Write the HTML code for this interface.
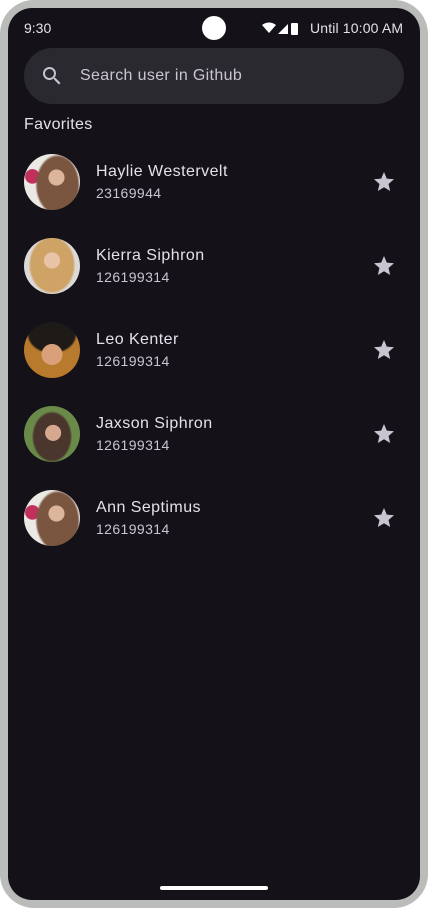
<!DOCTYPE html>
<html><head><meta charset="utf-8"><style>
*{margin:0;padding:0;box-sizing:border-box}
html,body{width:428px;height:908px;background:#fff;overflow:hidden;font-family:"Liberation Sans",sans-serif}
.frame{position:absolute;left:0;top:0;width:428px;height:908px;background:#babcba;border-radius:34px}
.screen{position:absolute;left:8px;top:8px;width:412px;height:892px;background:#141218;border-radius:24px;overflow:hidden}
.t{position:absolute;color:#e6e0e9;white-space:nowrap}
.n{font-size:16px;letter-spacing:0.45px}
.s{font-size:14px;color:#cac4d0;letter-spacing:0.4px}
.search{position:absolute;left:16px;top:40px;width:380px;height:56px;border-radius:28px;background:#2b2930}
.av{position:absolute;left:16px;width:56px;height:56px;border-radius:50%;overflow:hidden}
.star{position:absolute;left:364px;width:24px;height:24px}
.bar{position:absolute;left:152px;top:878px;width:108px;height:4px;border-radius:2px;background:#fff}
</style></head><body>
<div class="frame"></div>
<div class="screen">
  <div class="t" style="left:16px;top:12px;font-size:14px">9:30</div>
  <div style="position:absolute;left:194px;top:8px;width:24px;height:24px;border-radius:50%;background:#fff"></div>
  <svg style="position:absolute;left:254px;top:14px" width="40" height="14" viewBox="0 0 40 14">
    <path d="M0 3 Q7 -2 14 3 L7 11 Z" fill="#fff"/>
    <path d="M16 12 L26 2 L26 12 Z" fill="#fff"/>
    <rect x="29" y="1" width="7" height="12" rx="1" fill="#fff"/>
  </svg>
  <div class="t" style="left:302px;top:12px;font-size:14px;letter-spacing:0.15px">Until 10:00 AM</div>
  <div class="search">
    <svg style="position:absolute;left:16px;top:16px" width="24" height="24" viewBox="0 0 24 24"><path fill="#cac4d0" d="M15.5 14h-.79l-.28-.27A6.47 6.47 0 0 0 16 9.5 6.5 6.5 0 1 0 9.5 16c1.61 0 3.09-.59 4.23-1.57l.27.28v.79l5 4.99L20.49 19l-4.99-5zm-6 0C7.01 14 5 11.99 5 9.5S7.01 5 9.5 5 14 7.01 14 9.5 11.99 14 9.5 14z"/></svg>
    <div class="t" style="left:56px;top:19px;font-size:16px;color:#cac4d0;letter-spacing:0.35px">Search user in Github</div>
  </div>
  <div class="t" style="left:16px;top:108px;font-size:16px;letter-spacing:0.3px">Favorites</div>

  <div class="av" style="top:146px;background:radial-gradient(circle at 58% 42%,#dcb59c 0 17%,transparent 18%),radial-gradient(ellipse 40% 55% at 60% 55%,#7a5640 0 90%,transparent 100%),radial-gradient(circle at 15% 40%,#c0305a 0 12%,transparent 13%),#ece8e4"></div>
  <div class="t n" style="left:88px;top:155px">Haylie Westervelt</div>
  <div class="t s" style="left:88px;top:177px">23169944</div>

  <div class="av" style="top:230px;background:radial-gradient(circle at 50% 40%,#e8c3a8 0 18%,transparent 19%),radial-gradient(ellipse 42% 52% at 50% 48%,#cfa266 0 90%,transparent 100%),#dcdad8"></div>
  <div class="t n" style="left:88px;top:239px">Kierra Siphron</div>
  <div class="t s" style="left:88px;top:261px">126199314</div>

  <div class="av" style="top:314px;background:radial-gradient(circle at 50% 58%,#d9a07a 0 24%,transparent 25%),radial-gradient(ellipse 45% 35% at 50% 22%,#1d1a18 0 90%,transparent 100%),#b87a2c"></div>
  <div class="t n" style="left:88px;top:323px">Leo Kenter</div>
  <div class="t s" style="left:88px;top:345px">126199314</div>

  <div class="av" style="top:398px;background:radial-gradient(circle at 52% 48%,#d6a890 0 19%,transparent 20%),radial-gradient(ellipse 36% 46% at 50% 55%,#4a362c 0 90%,transparent 100%),#6a8a4a"></div>
  <div class="t n" style="left:88px;top:407px">Jaxson Siphron</div>
  <div class="t s" style="left:88px;top:429px">126199314</div>

  <div class="av" style="top:482px;background:radial-gradient(circle at 58% 42%,#dcb59c 0 17%,transparent 18%),radial-gradient(ellipse 40% 55% at 60% 55%,#7a5640 0 90%,transparent 100%),radial-gradient(circle at 15% 40%,#c0305a 0 12%,transparent 13%),#ece8e4"></div>
  <div class="t n" style="left:88px;top:491px">Ann Septimus</div>
  <div class="t s" style="left:88px;top:513px">126199314</div>

  <svg class="star" style="top:162px" viewBox="0 0 24 24"><path fill="#cac4d0" d="M12 17.27L18.18 21l-1.64-7.03L22 9.24l-7.19-.61L12 2 9.19 8.63 2 9.24l5.46 4.73L5.82 21z"/></svg>
  <svg class="star" style="top:246px" viewBox="0 0 24 24"><path fill="#cac4d0" d="M12 17.27L18.18 21l-1.64-7.03L22 9.24l-7.19-.61L12 2 9.19 8.63 2 9.24l5.46 4.73L5.82 21z"/></svg>
  <svg class="star" style="top:330px" viewBox="0 0 24 24"><path fill="#cac4d0" d="M12 17.27L18.18 21l-1.64-7.03L22 9.24l-7.19-.61L12 2 9.19 8.63 2 9.24l5.46 4.73L5.82 21z"/></svg>
  <svg class="star" style="top:414px" viewBox="0 0 24 24"><path fill="#cac4d0" d="M12 17.27L18.18 21l-1.64-7.03L22 9.24l-7.19-.61L12 2 9.19 8.63 2 9.24l5.46 4.73L5.82 21z"/></svg>
  <svg class="star" style="top:498px" viewBox="0 0 24 24"><path fill="#cac4d0" d="M12 17.27L18.18 21l-1.64-7.03L22 9.24l-7.19-.61L12 2 9.19 8.63 2 9.24l5.46 4.73L5.82 21z"/></svg>

  <div class="bar"></div>
</div>
</body></html>
